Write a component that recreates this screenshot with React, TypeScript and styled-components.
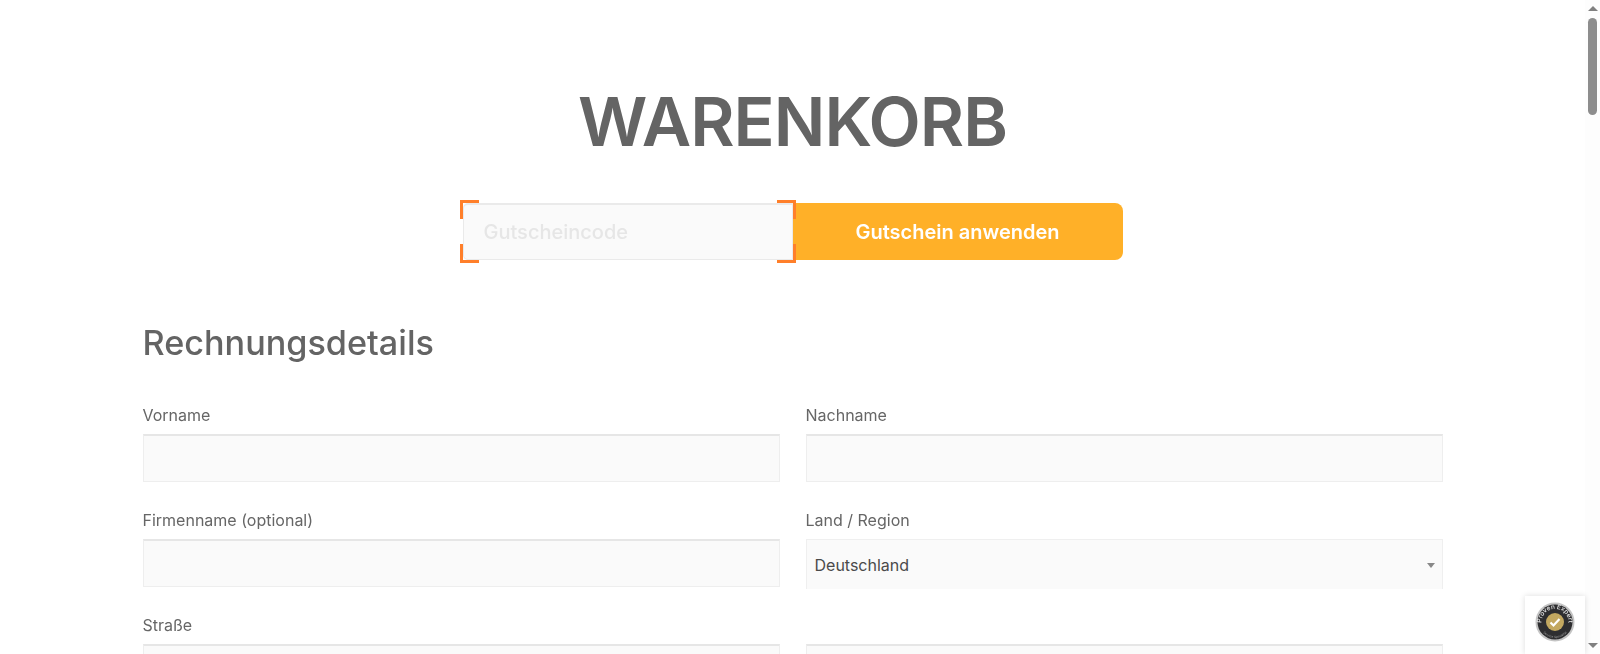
import styled, { createGlobalStyle } from 'styled-components'

const GlobalStyle = createGlobalStyle`
  html, body { margin: 0; padding: 0; height: 100%; overflow: hidden; background: #fff; }
  #root { height: 100%; }
  * { box-sizing: border-box; }
`
const Shell = styled.div`
  display: flex;
  height: 654px;
  overflow: hidden;
  font-family: Inter, "Liberation Sans", sans-serif;
  color: #666;
`
const Page = styled.main`
  flex: 1;
  min-width: 0;
  padding-top: 76px;
  will-change: opacity;
`
const Title = styled.h1`
  margin: 0;
  font-size: 68px;
  line-height: 91px;
  font-weight: 600;
  letter-spacing: -1px;
  text-align: center;
  color: #646464;
`
const CouponForm = styled.form`
  display: flex;
  width: 660px;
  margin: 36px auto 0;
`
const CouponField = styled.div`
  position: relative;
  width: 330px;
  height: 57px;
`
const CouponInput = styled.input`
  width: 100%;
  height: 100%;
  padding: 0 20px;
  border: 1px solid #eaeaea;
  border-top-width: 2px;
  border-radius: 5px 0 0 5px;
  background: #fafafa;
  font: 500 20px Inter, "Liberation Sans", sans-serif;
  outline: none;
  &::placeholder { color: #e6e6e6; opacity: 1; }
`
const Corner = styled.span<{ $v: 'top' | 'bottom'; $h: 'left' | 'right' }>`
  position: absolute;
  width: 19px;
  height: 19px;
  ${p => p.$v}: -3px;
  ${p => p.$h}: -3px;
  border-${p => p.$v}: 3px solid #ff7f2a;
  border-${p => p.$h}: 3px solid #ff7f2a;
`
const CouponButton = styled.button`
  width: 330px;
  height: 57px;
  border: 0;
  border-radius: 0 8px 8px 0;
  background: #ffb028;
  color: #fff;
  font: 600 20px Inter, "Liberation Sans", sans-serif;
`
const Billing = styled.section`
  width: 1300px;
  margin: 58px auto 0;
`
const Heading = styled.h2`
  margin: 0 0 35px;
  font-size: 34.2px;
  line-height: 50px;
  font-weight: 450;
  color: #646464;
`
const Grid = styled.div`
  display: grid;
  grid-template-columns: 637px 637px;
  column-gap: 26px;
  row-gap: 26px;
`
const Field = styled.label`
  display: block;
`
const LabelText = styled.span`
  display: block;
  margin-bottom: 7px;
  font-size: 16px;
  line-height: 24px;
  color: #666;
`
const TextInput = styled.input`
  display: block;
  width: 100%;
  height: 48px;
  border: 1px solid #eeeeee;
  border-top: 2px solid #e6e6e6;
  background: #fafafa;
  outline: none;
`
const SelectBox = styled.div`
  position: relative;
  display: flex;
  align-items: center;
  height: 50px;
  margin-bottom: -2px;
  padding-left: 8px;
  border-top: 1px solid #efefef;
  border-left: 1px solid #efefef;
  border-right: 1px solid #efefef;
  background: #fafafa;
  font-size: 16px;
  color: #4a4a4a;
`
const Caret = styled.span`
  position: absolute;
  right: 7px;
  top: 23px;
  border-left: 4px solid transparent;
  border-right: 4px solid transparent;
  border-top: 5px solid #888;
`
const Scrollbar = styled.aside`
  display: flex;
  flex-direction: column;
  align-items: center;
  justify-content: space-between;
  width: 15px;
  height: 100%;
  padding: 6px 0;
  background: #fdfdfd;
`
const ArrowUp = styled.span`
  border-left: 5px solid transparent;
  border-right: 5px solid transparent;
  border-bottom: 5px solid #808080;
`
const ArrowDown = styled.span`
  border-left: 5px solid transparent;
  border-right: 5px solid transparent;
  border-top: 5px solid #808080;
`
const Track = styled.div`
  flex: 1;
  width: 100%;
  padding: 7px 3px 0;
`
const Thumb = styled.div`
  height: 97px;
  border-radius: 5px;
  background: #8d8d8d;
`
const Badge = styled.div`
  position: fixed;
  right: 15px;
  bottom: 0;
  display: flex;
  justify-content: center;
  width: 60px;
  height: 58px;
  padding-top: 6px;
  background: #fff;
  box-shadow: 0 0 6px rgba(0, 0, 0, 0.14);
`

function ExpertBadge() {
  return (
    <svg width="40" height="40" viewBox="0 0 40 40">
      <defs>
        <path id="badgeTop" d="M7 24a13.5 13.5 0 1 1 26 0" />
        <path id="badgeBottom" d="M4 20a16 16 0 0 0 32 0" />
      </defs>
      <circle cx="20" cy="20" r="19.5" fill="#c4c4c4" />
      <circle cx="20" cy="20" r="17.5" fill="#2e2e30" />
      <text fontSize="6.4" fontWeight="500" fill="#e8e8e8" textAnchor="middle" fontFamily="Inter, sans-serif">
        <textPath href="#badgeTop" startOffset="50%">Proven Expert</textPath>
      </text>
      <text fontSize="3.2" fill="#9a9a9a" textAnchor="middle" fontFamily="Inter, sans-serif">
        <textPath href="#badgeBottom" startOffset="50%">Service Specialist</textPath>
      </text>
      <circle cx="20" cy="20" r="9" fill="#c3a860" />
      <path d="M15.5 20.5l3 3 6-6.5" fill="none" stroke="#fff" strokeWidth="2.2" />
    </svg>
  )
}

export default function App() {
  return (
    <>
      <GlobalStyle />
      <Shell>
        <Page>
          <Title>WARENKORB</Title>
          <CouponForm>
            <CouponField>
              <CouponInput placeholder="Gutscheincode" />
              <Corner $v="top" $h="left" />
              <Corner $v="top" $h="right" />
              <Corner $v="bottom" $h="left" />
              <Corner $v="bottom" $h="right" />
            </CouponField>
            <CouponButton type="button">Gutschein anwenden</CouponButton>
          </CouponForm>
          <Billing>
            <Heading>Rechnungsdetails</Heading>
            <Grid>
              <Field>
                <LabelText>Vorname</LabelText>
                <TextInput />
              </Field>
              <Field>
                <LabelText>Nachname</LabelText>
                <TextInput />
              </Field>
              <Field>
                <LabelText>Firmenname (optional)</LabelText>
                <TextInput />
              </Field>
              <Field>
                <LabelText>Land / Region</LabelText>
                <SelectBox>
                  Deutschland
                  <Caret />
                </SelectBox>
              </Field>
              <Field>
                <LabelText>Straße</LabelText>
                <TextInput />
              </Field>
              <Field>
                <LabelText>&nbsp;</LabelText>
                <TextInput />
              </Field>
            </Grid>
          </Billing>
        </Page>
        <Scrollbar>
          <ArrowUp />
          <Track>
            <Thumb />
          </Track>
          <ArrowDown />
        </Scrollbar>
        <Badge>
          <ExpertBadge />
        </Badge>
      </Shell>
    </>
  )
}
